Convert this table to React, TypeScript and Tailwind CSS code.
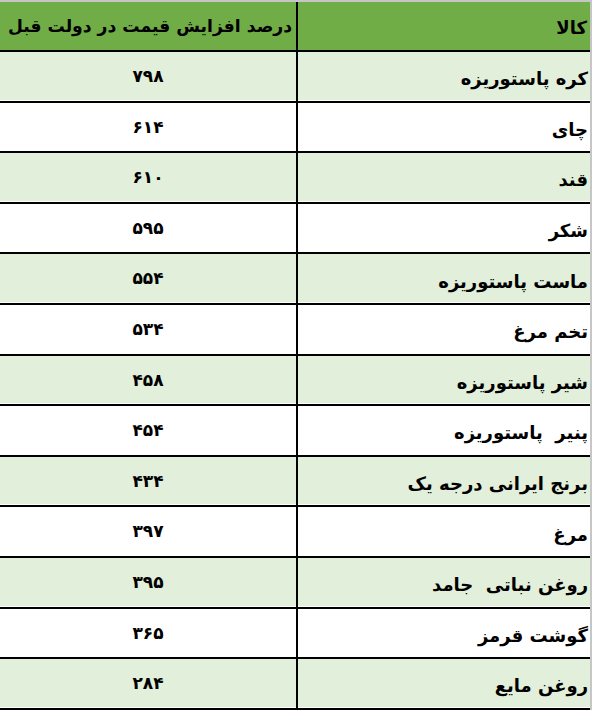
const rows: [string, string][] = [
  ['کره پاستوریزه', '۷۹۸'],
  ['چای', '۶۱۴'],
  ['قند', '۶۱۰'],
  ['شکر', '۵۹۵'],
  ['ماست پاستوریزه', '۵۵۴'],
  ['تخم مرغ', '۵۳۴'],
  ['شیر پاستوریزه', '۴۵۸'],
  ['پنیر\u00a0 پاستوریزه', '۴۵۴'],
  ['برنج ایرانی درجه یک', '۴۳۴'],
  ['مرغ', '۳۹۷'],
  ['روغن نباتی\u00a0 جامد', '۳۹۵'],
  ['گوشت قرمز', '۳۶۵'],
  ['روغن مایع', '۲۸۴'],
]

export default function App() {
  return (
    <div className="w-[593px] h-[711px] bg-white overflow-hidden font-['DejaVu_Sans',sans-serif] text-black">
      <div className="w-[592px] border-t-2 border-r-2 border-[#c6c6c6]">
        {/* header */}
        <div className="flex h-[50px] border-b-2 border-black bg-[#70ad47] font-bold">
          <div className="w-[298px] flex items-center justify-end pr-[4px] pt-[2px] border-r-2 border-black whitespace-nowrap text-[17.2px]">
            <span dir="rtl">درصد افزایش قیمت در دولت قبل</span>
          </div>
          <div className="flex-1 flex items-center justify-end pr-[3px] pt-[2px] text-[18px]">
            <span dir="rtl">کالا</span>
          </div>
        </div>
        {rows.map(([name, pct], i) => (
          <div
            key={name}
            className={
              'flex h-[50.6px] border-b-2 border-black ' +
              (i % 2 === 0 ? 'bg-[#e2efda] shadow-[inset_0_-1px_0_#ffffff]' : 'bg-white')
            }
          >
            <div className="w-[298px] flex items-center justify-center pt-[1px] border-r-2 border-black text-[17px]">
              <span dir="rtl" className="font-bold">{pct}</span>
            </div>
            <div className="flex-1 flex items-center justify-end pr-[2px] pt-[5px] whitespace-nowrap text-[18px]">
              <span dir="rtl" className="font-bold">{name}</span>
            </div>
          </div>
        ))}
      </div>
    </div>
  )
}
